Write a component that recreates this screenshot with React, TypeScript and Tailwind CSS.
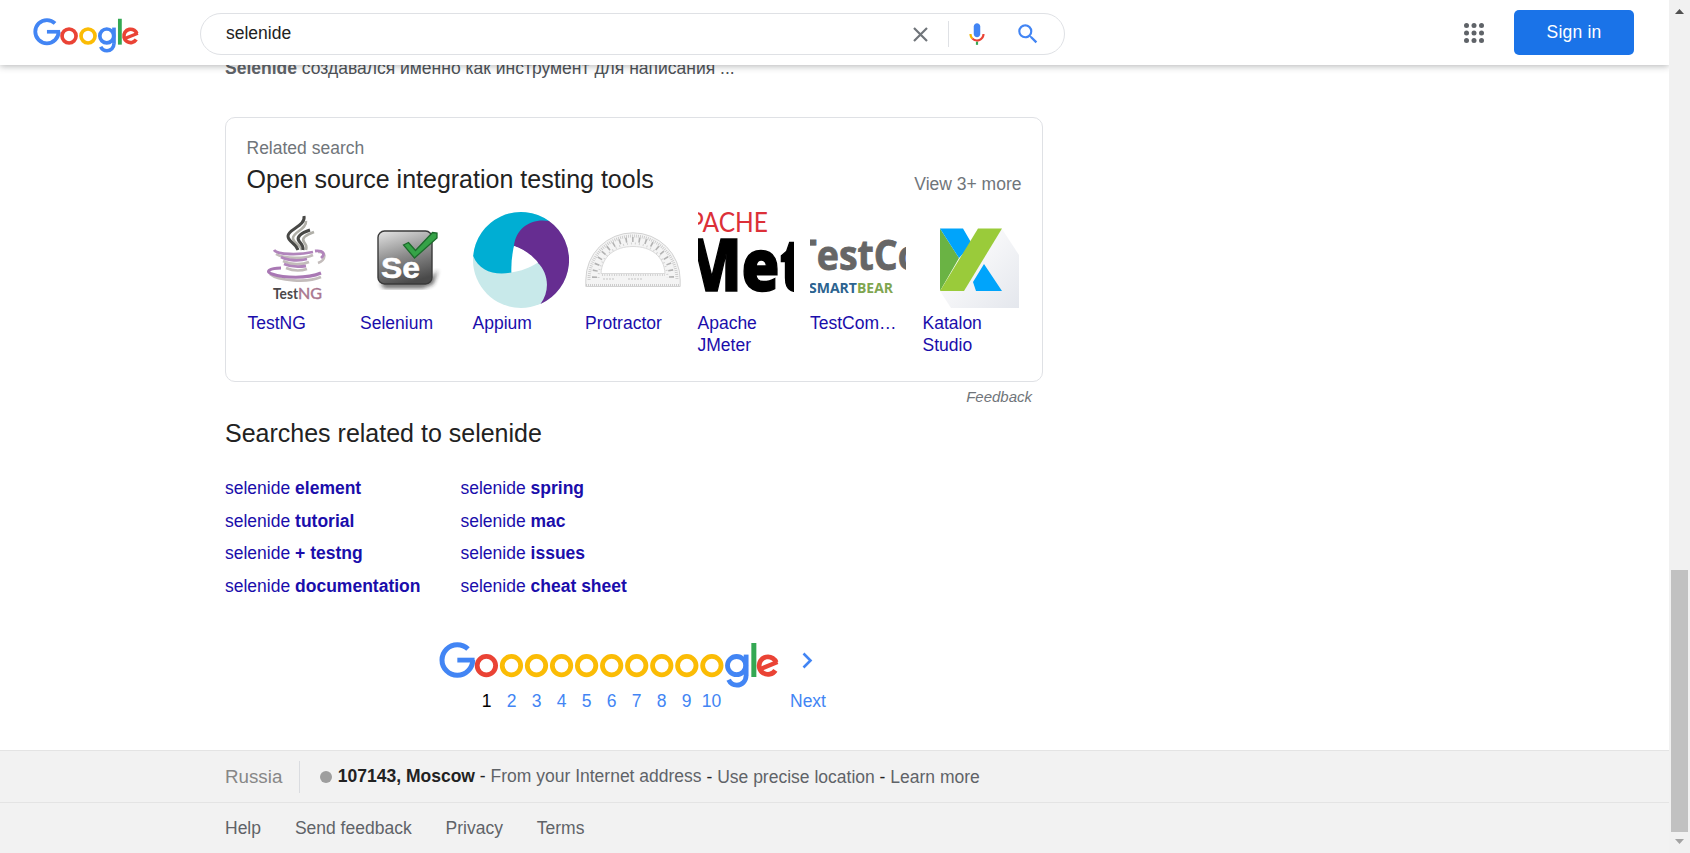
import React from "react";

const BLUE = "#4285f4";
const RED = "#ea4335";
const YELLOW = "#fbbc05";
const GREEN = "#34a853";

/** Geometric wordmark: ring, bar and line primitives only. `os` is the colour of each "o". */
function Wordmark({ os, pitch, width, height, className }: { os: string[]; pitch: number; width: number; height: number; className: string }) {
  const start = 47.3;
  const end = start + pitch * (os.length - 1);
  const g = end + pitch;
  return (
    <svg className={className} width={width} height={height} viewBox={`0 0 ${g + 42} 46`} preserveAspectRatio="none" fill="none" role="img" aria-label="Google">
      <circle cx="18.3" cy="18" r="15.3" stroke={BLUE} strokeWidth="5" pathLength="360" strokeDasharray="314 46" />
      <rect x="18.3" y="15.7" width="17.2" height="4.8" fill={BLUE} />
      {os.map((c, i) => (
        <circle key={i} cx={start + i * pitch} cy="23.6" r="9.2" stroke={c} strokeWidth="4.8" />
      ))}
      <circle cx={g - 0.3} cy="23.6" r="9.1" stroke={BLUE} strokeWidth="4.8" />
      <rect x={g + 6.8} y="12.6" width="4.8" height="21.4" fill={BLUE} />
      <circle cx={g} cy="34" r="9.1" stroke={BLUE} strokeWidth="4.8" pathLength="360" strokeDasharray="155 205" />
      <rect x={g + 14.4} y="1" width="5" height="34" fill={GREEN} />
      <circle cx={g + 31} cy="23.6" r="8.8" stroke={RED} strokeWidth="4.8" pathLength="360" strokeDasharray="305 55" transform={`rotate(33 ${g + 31} 23.6)`} />
      <line x1={g + 23.5} y1="27" x2={g + 40.5} y2="20" stroke={RED} strokeWidth="4.2" />
    </svg>
  );
}

function TestNg() {
  return (
    <svg width="96" height="96" viewBox="0 0 96 96" fill="none">
      <path d="M58 9c1 8-13 11-13 17 0 5 7 6 9 12M66 20c-8 3-13 6-10 10 2 3 3 4 2 8" stroke="#b0afa8" strokeWidth="2.6" />
      <path d="M56 4c2 10-16 13-16 20 0 6 8 7 10 14M62 18c-9 3-14 7-11 11 3 4 5 5 4 9" stroke="#484846" strokeWidth="3" />
      <path d="M28 42c8 5 29 5 37 1M35 49c8 4 19 4 26 1M38 56c7 3 15 3 21 1M22 62c8 7 38 9 51 3M70 40c9-1 8 8 0 11" stroke="#c3bcbb" strokeWidth="2.6" />
      <path d="M26 38c3 5 26 5 39 2M33 45c7 4 19 4 26 2M36 52c7 3 16 3 22 2M67 39c8-1 11 3 6 7" stroke="#b184bb" strokeWidth="2.8" />
      <path d="M33 56c-12 0-16 4-9 6 12 4 35 5 49-1" stroke="#a978b4" strokeWidth="3" />
      <text x="25" y="87" fontFamily="Lato, sans-serif" fontSize="14.5" fontWeight="700" fill="#4c484a" textLength="25" lengthAdjust="spacingAndGlyphs">Test</text>
      <text x="50" y="87" fontFamily="Lato, sans-serif" fontSize="14.5" fill="#a9768f" stroke="#a9768f" strokeWidth=".4" textLength="24" lengthAdjust="spacingAndGlyphs">NG</text>
    </svg>
  );
}

function Selenium() {
  return (
    <svg width="96" height="96" viewBox="0 0 96 96" fill="none">
      <defs>
        <linearGradient id="steel" x1="0.2" y1="0" x2="0.5" y2="1">
          <stop offset="0" stopColor="#dcdcdc" />
          <stop offset=".5" stopColor="#8c8c8c" />
          <stop offset="1" stopColor="#4a4a4a" />
        </linearGradient>
        <filter id="soft"><feGaussianBlur stdDeviation="2" /></filter>
      </defs>
      <path d="M20 71h46l12-13-5 14-10 4H24z" fill="#222" opacity=".75" filter="url(#soft)" />
      <rect x="18" y="19" width="54" height="53" rx="6.500" fill="url(#steel)" stroke="#3a3a3a" strokeWidth="1.400" />
      <text x="21" y="65.500" fontFamily="Liberation Sans, sans-serif" fontWeight="700" fontSize="30" fill="#fff" stroke="#fff" strokeWidth=".5" textLength="39" lengthAdjust="spacingAndGlyphs">Se</text>
      <path d="M43.500 33l5-2.500 7 8 17-18 4.500.500v5L54.500 46z" fill="#35a347" stroke="#1d6a2c" strokeWidth="1.300" />
    </svg>
  );
}

function Appium() {
  return (
    <svg width="96" height="96" viewBox="0 0 96 96">
      <circle cx="48" cy="48" r="48" fill="#c8e9ea" />
      <path d="M.2 44A48 48 0 0 1 76 9L60 34L41 34L38.500 60.500C22 64 6 59 .2 44Z" fill="#00aed3" />
      <path d="M41 34C43 16 58 6 76 9A48 48 0 0 1 67.500 91.900C77 80 76 61 64.500 50.500C57 42 49 37 41 34Z" fill="#662d91" />
      <path d="M41 34C50 37 58 42 65 50.500C56 56 48 59 38.500 60.500C38 51 39 43 41 34Z" fill="#fff" />
    </svg>
  );
}

function Protractor() {
  return (
    <svg width="96" height="96" viewBox="0 0 96 96" fill="none">
      <path d="M.8 74.500V68a47.200 47.200 0 0 1 94.400 0v6.500z" fill="#f4f4f4" stroke="#d2d2d2" strokeWidth="1" />
      <path d="M16 61.500C17 44 30 34.500 48 34.500S79 44 80 61.500z" fill="#fff" stroke="#dadada" strokeWidth="1" />
      <path d="M4 68a44 44 0 0 1 88 0" stroke="#c6c6c6" strokeWidth="3" strokeDasharray=".8 1.200" />
      <path d="M9.500 66a38.500 38.500 0 0 1 77 0" stroke="#b2b2b2" strokeWidth="5" strokeDasharray="1.600 5" />
      <path d="M13.500 66a34.500 34.500 0 0 1 69 0" stroke="#d2d2d2" strokeWidth="2" strokeDasharray="1 3" />
      <path d="M17 63h63" stroke="#c9c9c9" strokeWidth="2" strokeDasharray=".8 1.600" />
      <path d="M18 67h12M43 67h14" stroke="#c4c4c4" strokeWidth="1.200" strokeDasharray="2 1" />
      <path d="M1 73h94" stroke="#c4c4c4" strokeWidth="2" strokeDasharray=".8 1.200" />
    </svg>
  );
}

function JMeter() {
  return (
    <svg width="96" height="96" viewBox="0 0 96 96">
      <text x="-9" y="20" fontFamily="Lato, sans-serif" fontSize="26" fill="#dc3038" textLength="79" lengthAdjust="spacingAndGlyphs">PACHE</text>
      <text x="-16" y="78.500" fontFamily="Open Sans, sans-serif" fontWeight="800" fontSize="73" fill="#000" stroke="#000" strokeWidth="1.500" textLength="126" lengthAdjust="spacingAndGlyphs">Met</text>
    </svg>
  );
}

function TestComplete() {
  return (
    <svg width="96" height="96" viewBox="0 0 96 96">
      <text x="-15" y="57.500" fontFamily="Open Sans, sans-serif" fontWeight="700" fontSize="41" fill="#666" stroke="#666" strokeWidth=".8" textLength="126" lengthAdjust="spacingAndGlyphs">TestCo</text>
      <text x="-1" y="81" fontFamily="Open Sans, sans-serif" fontWeight="700" fontSize="14.500" fill="#2c6390" textLength="48" lengthAdjust="spacingAndGlyphs">SMART</text>
      <text x="47" y="81" fontFamily="Open Sans, sans-serif" fontWeight="700" fontSize="14.500" fill="#7fa650" textLength="36" lengthAdjust="spacingAndGlyphs">BEAR</text>
    </svg>
  );
}

function Katalon() {
  return (
    <svg width="96" height="96" viewBox="0 0 96 96">
      <defs>
        <linearGradient id="paper" x1="0" y1="0" x2="1" y2="1">
          <stop offset=".3" stopColor="#fafafb" />
          <stop offset="1" stopColor="#e4e7ed" />
        </linearGradient>
      </defs>
      <path d="M79 17L96 43V96H28L17 79z" fill="url(#paper)" />
      <path d="M17 16.500L36 46L17 79z" fill="#6ab344" />
      <path d="M17 16.500H40L49 32L36 46zM61 52L79 79H53L50 70z" fill="#00a4fb" />
      <path d="M55 16.500H79L41 79H17z" fill="#9acb3a" />
    </svg>
  );
}

const tools = [
  { label: "TestNG", art: <TestNg /> },
  { label: "Selenium", art: <Selenium /> },
  { label: "Appium", art: <Appium /> },
  { label: "Protractor", art: <Protractor /> },
  { label: "Apache JMeter", art: <JMeter /> },
  { label: "TestCom…", art: <TestComplete /> },
  { label: "Katalon Studio", art: <Katalon /> },
];

const related = [
  ["element", "spring"],
  ["tutorial", "mac"],
  ["+ testng", "issues"],
  ["documentation", "cheat sheet"],
];

function Header() {
  return (
    <header className="relative z-10 flex h-[65px] shrink-0 items-start bg-white shadow-[0_1px_7px_rgba(32,33,36,0.35)]">
      <a className="ml-[33px] mt-[18px] block w-[167px]">
        <Wordmark os={[RED, YELLOW]} pitch={24.9} width={106} height={35} className="block" />
      </a>
      <div className="mt-[13px] flex h-[42px] w-[865px] items-center rounded-[21px] border border-[#dfe1e5] pl-[25px]">
        <span className="relative -top-px flex-1 text-[#222]">selenide</span>
        <svg className="mr-[20px]" width="15" height="15" viewBox="0 0 15 15" stroke="#70757a" strokeWidth="2.200">
          <path d="M1 1l13 13M14 1L1 14" />
        </svg>
        <span className="mr-[14.500px] h-[26px] w-px bg-[#dfe1e5]" />
        <svg className="mr-[25.500px]" width="26" height="26" viewBox="0 0 24 24">
          <path fill={BLUE} d="M12 15c1.660 0 3-1.340 3-3V5c0-1.660-1.340-3-3-3S9 3.340 9 5v7c0 1.660 1.340 3 3 3z" />
          <path fill={GREEN} d="M11 18.900h2V22h-2z" />
          <path fill="#f4b400" d="M7 12H5c0 1.930.780 3.680 2.050 4.950l1.410-1.410C7.560 14.630 7 13.380 7 12z" />
          <path fill={RED} d="M12 17c-1.380 0-2.630-.560-3.540-1.470l-1.410 1.410A6.990 6.990 0 0 0 12 19c3.870 0 6.990-3.130 6.990-7H17c0 2.760-2.240 5-5 5z" />
        </svg>
        <svg className="mr-[23px]" width="26" height="26" viewBox="0 0 24 24" fill={BLUE}>
          <path d="M15.500 14h-.790l-.280-.270A6.470 6.470 0 0 0 16 9.500 6.500 6.500 0 1 0 9.500 16c1.610 0 3.090-.590 4.230-1.570l.270.280v.790l5 4.990L20.490 19l-4.990-5zm-6 0C7.010 14 5 11.990 5 9.500S7.010 5 9.500 5 14 7.010 14 9.500 11.990 14 9.500 14z" />
        </svg>
      </div>
      <svg className="ml-auto mt-[23px]" width="20" height="20" viewBox="0 0 20 20" fill="#5f6368">
        {[2.5, 10, 17.5].map((y) => [2.5, 10, 17.5].map((x) => <circle key={`${x}-${y}`} cx={x} cy={y} r="2.500" />))}
      </svg>
      <button className="ml-[30px] mr-[35px] mt-[10px] h-[45px] w-[120px] rounded-[5px] bg-[#1a73e8] pb-[2px] tracking-[0.2px] text-white">Sign in</button>
    </header>
  );
}

function RelatedCard() {
  return (
    <section className="mt-[38px] h-[265px] w-[818px] rounded-[10px] border border-[#dfe1e5] pl-[20.500px] pr-[20.500px] pt-[18px]">
      <div className="leading-[24px] text-[#70757a]">Related search</div>
      <div className="flex items-baseline justify-between">
        <h3 className="text-[25px] leading-[38px] text-[#222]">Open source integration testing tools</h3>
        <span className="relative top-[2px] text-[#70757a]">View 3+ more</span>
      </div>
      <div className="ml-[1px] mt-[14px] flex gap-[16.500px]">
        {tools.map((t) => (
          <a key={t.label} className="block w-[96px] shrink-0 text-[#1a0dab]">
            <span className="block h-[96px] overflow-hidden">{t.art}</span>
            <span className="mt-[4px] block w-[89px] leading-[22px]">{t.label}</span>
          </a>
        ))}
      </div>
    </section>
  );
}

function Pager() {
  return (
    <nav className="ml-[214px] mt-[40px] flex text-[#4285f4]">
      <div className="w-[351px]">
        <Wordmark os={[RED, ...Array(9).fill(YELLOW)]} pitch={25} width={340} height={46} className="block" />
        <div className="ml-[35px] mt-[1px] flex leading-[24px]">
          {Array.from({ length: 10 }, (_, i) => (
            <span key={i} className={i === 0 ? "w-[25px] text-center text-black" : "w-[25px] text-center"}>{i + 1}</span>
          ))}
        </div>
      </div>
      <a className="flex flex-col">
        <svg className="ml-[12px] mt-[10px]" width="11" height="17" viewBox="0 0 11 17" fill="none" stroke={BLUE} strokeWidth="2.600">
          <path d="M1.500 1.500L8.500 8.500L1.500 15.500" />
        </svg>
        <span className="mt-[20px] leading-[24px]">Next</span>
      </a>
    </nav>
  );
}

function Footer() {
  return (
    <footer className="mt-auto h-[103px] border-t border-[#e4e4e4] bg-[#f2f2f2] text-[#5f6368]">
      <div className="flex h-[52px] items-center border-b border-[#e4e4e4] pl-[225px]">
        <span className="mr-[17px] text-[18.750px] text-[#878787]">Russia</span>
        <span className="mr-[20px] h-[32px] w-px bg-[#dadce0]" />
        <span className="mr-[5.500px] size-[12px] rounded-full bg-[#9e9e9e]" />
        <span className="relative -top-px"><b className="text-[#222]">107143, Moscow</b><span className="text-[#222]"> - </span>From your Internet address</span>
        <span className="whitespace-pre"><span className="text-[#222]"> - </span>Use precise location<span className="text-[#222]"> - </span>Learn more</span>
      </div>
      <div className="flex h-[50px] items-center gap-[33.900px] pl-[225px]">
        <span>Help</span>
        <span>Send feedback</span>
        <span>Privacy</span>
        <span>Terms</span>
      </div>
    </footer>
  );
}

export default function App() {
  return (
    <div className="flex h-[853px] w-[1690px] overflow-hidden bg-white font-['Liberation_Sans',Arial,sans-serif] text-[17.500px] leading-[22px]">
      <div className="flex w-[1669px] flex-col overflow-hidden">
        <Header />
        <main className="pl-[225px]">
          <p className="-mt-[8px] text-[#4d5156]"><b className="text-[#5f6368]">Selenide</b> создавался именно как инструмент для написания ...</p>
          <RelatedCard />
          <div className="mt-[4px] w-[807px] text-right text-[15px] italic text-[#70757a]">Feedback</div>
          <h3 className="mt-[9px] text-[25px] leading-[32px] text-[#222]">Searches related to selenide</h3>
          <div className="mt-[23px] grid w-[480px] grid-cols-[235.500px_1fr] text-[#1a0dab]">
            {related.flat().map((r) => (
              <a key={r} className="h-[32.500px] leading-[32.500px]">selenide <b>{r}</b></a>
            ))}
          </div>
          <Pager />
        </main>
        <Footer />
      </div>
      <aside className="flex w-[21px] flex-col items-center bg-[#f1f1f1]">
        <svg className="mt-[9px]" width="9" height="5" viewBox="0 0 9 5" fill="#505050"><path d="M0 5L4.500 0L9 5z" /></svg>
        <div className="mt-[556px] h-[262px] w-[17px] bg-[#c1c1c1]" />
        <svg className="mt-[7px]" width="9" height="5" viewBox="0 0 9 5" fill="#a3a3a3"><path d="M0 0H9L4.500 5z" /></svg>
      </aside>
    </div>
  );
}
